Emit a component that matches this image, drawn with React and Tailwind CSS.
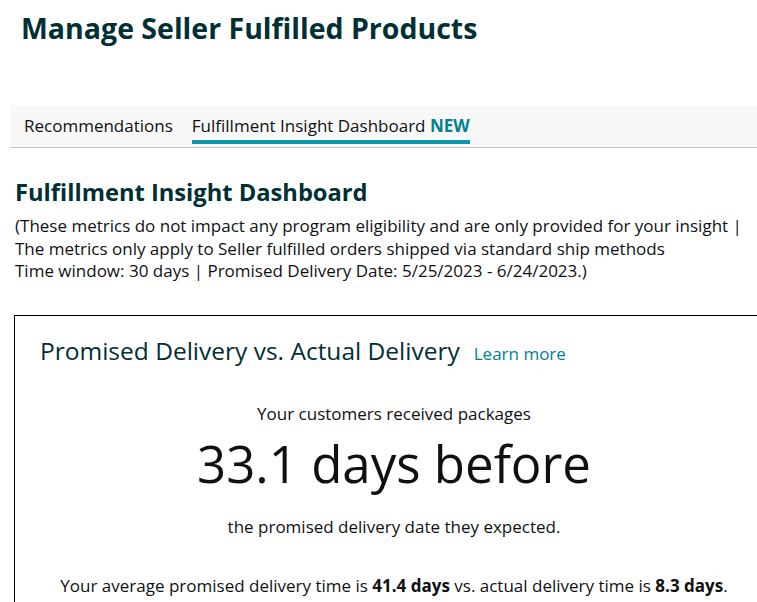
export default function App() {
  return (
    <div className="w-[757px] h-[602px] overflow-hidden bg-white text-[#0f1111] font-['Open_Sans',sans-serif]">
      {/* Page title */}
      <h1 className="pl-[21px] pt-[8px] text-[28.5px] font-bold leading-[40px] text-[#002f36]">
        Manage Seller Fulfilled Products
      </h1>

      {/* Tabs */}
      <div className="ml-[10px] mt-[57px] flex h-[43px] items-start gap-[19px] border-b border-[#c4c4c4] bg-[#f8f8f8] px-[14px] pt-[10px]">
        <button type="button" className="text-[17px] leading-[22px] text-[#0f1111]">
          Recommendations
        </button>
        <button
          type="button"
          className="border-b-4 border-[#0a98a8] pb-[3px] text-[17px] leading-[22px] text-[#0f1111]"
        >
          Fulfillment Insight Dashboard <span className="font-bold text-[#00838f]">NEW</span>
        </button>
      </div>

      {/* Section */}
      <div className="px-[15px] pt-[28px]">
        <h2 className="text-[23.7px] font-bold leading-[32px] text-[#002f36]">
          Fulfillment Insight Dashboard
        </h2>
        <p className="mt-[7px] text-[17px] leading-[22.5px]">
          (These metrics do not impact any program eligibility and are only provided for your insight |
          <br />
          The metrics only apply to Seller fulfilled orders shipped via standard ship methods
          <br />
          Time window: 30 days | Promised Delivery Date: 5/25/2023 - 6/24/2023.)
        </p>
      </div>

      {/* Card */}
      <div className="ml-[14px] mt-[32px] w-[760px] border border-black px-[25px] pb-[40px] pt-[19px]">
        <div className="flex items-baseline gap-[14px]">
          <h3 className="text-[24.5px] leading-[32px] text-[#002f36]">
            Promised Delivery vs. Actual Delivery
          </h3>
          <a href="#" className="text-[17px] text-[#008296]">
            Learn more
          </a>
        </div>

        <div className="mt-[35px] flex flex-col items-center text-center">
          <p className="text-[17px] leading-[24px]">Your customers received packages</p>
          <p className="mt-[5px] text-[51px] leading-[64px] text-[#0f1111]">33.1 days before</p>
          <p className="mt-[20px] text-[17px] leading-[24px]">the promised delivery date they expected.</p>
          <p className="mt-[35px] text-[17px] leading-[24px]">
            Your average promised delivery time is <span className="font-bold">41.4 days</span> vs. actual
            delivery time is <span className="font-bold">8.3 days</span>.
          </p>
        </div>
      </div>
    </div>
  );
}
